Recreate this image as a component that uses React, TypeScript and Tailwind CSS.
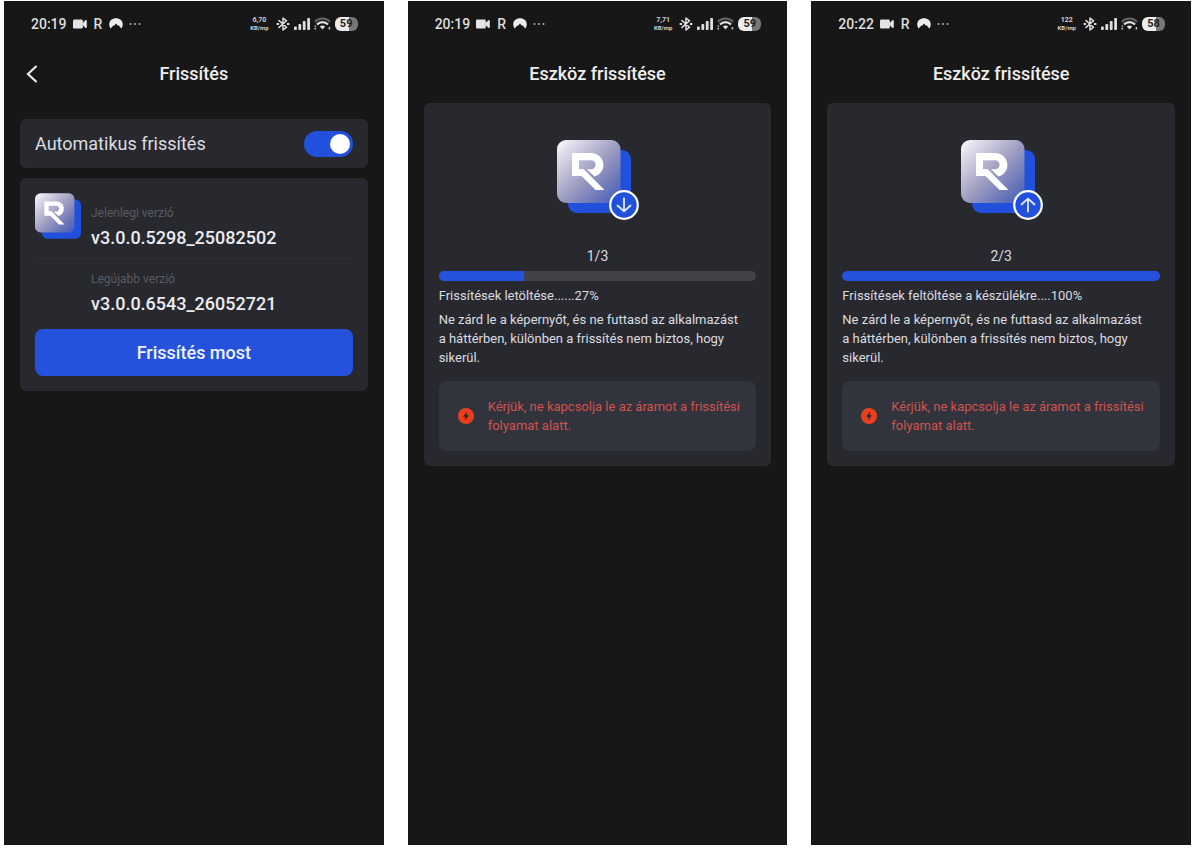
import { useId, useState, type ReactNode } from "react";

function VideoIcon() {
  return (
    <svg className="h-[10px] w-[14px]" viewBox="0 0 14 10" fill="#e4e4e4" aria-hidden="true">
      <rect x="0" y="0.5" width="9.8" height="9" rx="1.2" />
      <path d="M9.4 4.2 L12.4 1.2 Q13.8 0.6 13.8 2 V8 Q13.8 9.4 12.4 8.8 L9.4 6 Z" />
    </svg>
  );
}

function ArcIcon() {
  return (
    <svg className="h-[11px] w-[14px]" viewBox="0 0 14 11" fill="#ececec" aria-hidden="true">
      <path d="M1.7 10.6 C-2 4.6 2 0.3 7 0.3 C12 0.3 16 4.6 12.3 10.6 L9.6 7.2 L8.9 7.8 L7 5.4 L4.9 8 L4.3 7.5 Z" />
    </svg>
  );
}

function DotsIcon() {
  return (
    <svg className="h-[4px] w-[12px]" viewBox="0 0 12 4" fill="#b4b4b4" aria-hidden="true">
      <circle cx="1.5" cy="2" r="1" />
      <circle cx="6" cy="2" r="1" />
      <circle cx="10.5" cy="2" r="1" />
    </svg>
  );
}

function BluetoothIcon() {
  return (
    <svg className="h-[14px] w-[14px]" viewBox="0 0 14 14" fill="none" stroke="#dedede" strokeWidth="1.5" aria-hidden="true">
      <path d="M3 3.6 L10.6 10.2 L7 13 V1 L10.6 3.8 L3 10.4" strokeLinejoin="round" strokeLinecap="round" />
      <path d="M0.6 7 H3 M11 7 H13.4" strokeWidth="1.8" />
    </svg>
  );
}

function SignalIcon() {
  return (
    <svg className="h-[12px] w-[16px]" viewBox="0 0 16 12" fill="#dedede" aria-hidden="true">
      <rect x="0" y="8.5" width="2.8" height="3.5" rx="0.8" />
      <rect x="4.4" y="6" width="2.8" height="6" rx="0.8" />
      <rect x="8.8" y="3" width="2.8" height="9" rx="0.8" />
      <rect x="13.2" y="0" width="2.8" height="12" rx="0.8" />
    </svg>
  );
}

function WifiIcon() {
  return (
    <svg className="h-[13px] w-[17px]" viewBox="0 0 17 13" fill="none" aria-hidden="true">
      <path d="M1 4.8 C5 0.3 12 0.3 16 4.8" stroke="#666666" strokeWidth="2" />
      <path d="M3 7.6 C6 4.3 11 4.3 14 7.6" stroke="#e0e0e0" strokeWidth="2.2" />
      <path d="M5.8 9.6 C7.4 8.1 9.6 8.1 11.2 9.6 L8.5 12.4 Z" fill="#e0e0e0" />
      <path d="M1.3 8.4 V9.8 M1.3 10.8 V12.4 M15.4 10 V12.6" stroke="#bdbdbd" strokeWidth="1.6" />
    </svg>
  );
}

function StatusBar({ time, speed, battery }: { time: string; speed: string; battery: string }) {
  return (
    <div className="flex h-[45px] items-center justify-between pl-[27px] pr-[26px]">
      <div className="flex items-center gap-[6px] text-[#dedede]">
        <span className="text-[14px] font-medium leading-4">{time}</span>
        <VideoIcon />
        <span className="px-[1px] text-[14px] font-medium leading-4">R</span>
        <ArcIcon />
        <DotsIcon />
      </div>
      <div className="flex items-center gap-1">
        <div className="mr-[3px] text-center text-[6px] font-bold leading-[8px] text-[#d0d0d0]">
          <div className="text-[7px]">{speed}</div>
          <div>KB/mp</div>
        </div>
        <BluetoothIcon />
        <SignalIcon />
        <WifiIcon />
        <div className="flex h-[14px] w-[23px] items-center justify-center rounded-[6px] bg-linear-to-r from-[#ececec] from-60% to-[#777777] to-60% text-[11px] font-bold leading-3 text-[#222222]">
          {battery}
        </div>
      </div>
    </div>
  );
}

function LogoShapes() {
  const id = useId();
  return (
    <>
      <defs>
        <linearGradient id={id} x1="0" y1="0" x2="1" y2="1">
          <stop offset="0" stopColor="#ffffff" />
          <stop offset="0.12" stopColor="#e6e3ee" />
          <stop offset="0.5" stopColor="#a09fc2" />
          <stop offset="0.8" stopColor="#6673b8" />
          <stop offset="1" stopColor="#3f5cc4" />
        </linearGradient>
      </defs>
      <rect x="11" y="10" width="63" height="63" rx="9" fill="#2150dc" />
      <rect x="0" y="0" width="63.5" height="63" rx="9" fill={`url(#${id})`} />
      <path
        d="M15 13 H34 A12 12 0 0 1 37.5 36.6 L30 29.3 H34 A4.3 4.3 0 0 0 34 20.2 H22 V29 H26.5 L47.5 50 H38.6 L24.5 36 H15 Z"
        fill="#ffffff"
      />
    </>
  );
}

function BadgedLogo({ direction }: { direction: "down" | "up" }) {
  return (
    <svg className="h-[81px] w-[81px] overflow-visible" viewBox="0 0 81 81" aria-hidden="true">
      <LogoShapes />
      <circle cx="67" cy="65" r="13.8" fill="#2150dc" stroke="#ffffff" strokeWidth="2.2" />
      <path
        d={direction === "down" ? "M67 58.5 V71 M60.5 65.5 L67 71.3 L73.5 65.5" : "M67 71.5 V59 M60.5 64.5 L67 58.7 L73.5 64.5"}
        fill="none"
        stroke="#e6ecff"
        strokeWidth="1.8"
        strokeLinecap="round"
      />
    </svg>
  );
}

function BoltIcon() {
  return (
    <svg className="h-4 w-4 shrink-0" viewBox="0 0 16 16" aria-hidden="true">
      <circle cx="8" cy="8" r="8" fill="#e8401f" />
      <path d="M9 3.6 L5 8.8 H7.4 L6.8 12.4 L11 7.2 H8.6 Z" fill="#33262b" />
    </svg>
  );
}

function Phone({ time, speed, battery, children }: { time: string; speed: string; battery: string; children: ReactNode }) {
  return (
    <section className="flex flex-col bg-[#171717]">
      <StatusBar time={time} speed={speed} battery={battery} />
      {children}
    </section>
  );
}

function UpdateSettings() {
  const [auto, setAuto] = useState(true);
  return (
    <Phone time="20:19" speed="6,70" battery="59">
      <header className="grid h-14 grid-cols-[1fr_auto_1fr] items-center px-[22px]">
        <button type="button" aria-label="Vissza" className="w-3">
          <svg className="h-[18px] w-3" viewBox="0 0 12 18" fill="none" stroke="#eeeeee" strokeWidth="2.1" strokeLinecap="round" aria-hidden="true">
            <path d="M10 1.5 L2 9 L10 16.5" />
          </svg>
        </button>
        <h1 className="text-[18px] font-medium leading-5 text-[#eeeeee]">Frissítés</h1>
      </header>
      <div className="mt-[17px] flex flex-col gap-[10px] px-4">
        <label className="flex h-[49px] items-center justify-between rounded-md bg-[#28292f] px-[15px]">
          <span className="text-[18px] leading-6 text-[#dcdce0]">Automatikus frissítés</span>
          <input
            type="checkbox"
            role="switch"
            checked={auto}
            onChange={(e) => setAuto(e.target.checked)}
            className="flex h-[26px] w-[49px] appearance-none items-center rounded-full bg-[#55565c] px-[3px] before:size-[20px] before:rounded-full before:bg-white checked:justify-end checked:bg-[#2150dc]"
          />
        </label>
        <div className="rounded-md bg-[#28292f] p-[15px]">
          <div className="flex gap-[10px]">
            <svg className="h-[46px] w-[46px] shrink-0" viewBox="0 0 74 73" aria-hidden="true">
              <LogoShapes />
            </svg>
            <div className="pt-3">
              <p className="text-[12px] leading-4 text-[#5a5b60]">Jelenlegi verzió</p>
              <p className="mt-[5px] text-[18px] font-medium leading-6 text-[#ececf0]">v3.0.0.5298_25082502</p>
            </div>
          </div>
          <div className="mt-2 border-t border-[#2f3035]" />
          <div className="pl-14 pt-3">
            <p className="text-[12px] leading-4 text-[#5a5b60]">Legújabb verzió</p>
            <p className="mt-[5px] text-[18px] font-medium leading-6 text-[#ececf0]">v3.0.0.6543_26052721</p>
          </div>
          <button type="button" className="mt-[13px] h-[47px] w-full rounded-lg bg-[#2452dc] text-[18px] font-medium leading-6 text-[#f0f3ff]">
            Frissítés most
          </button>
        </div>
      </div>
    </Phone>
  );
}

interface ProgressProps {
  time: string;
  speed: string;
  battery: string;
  direction: "down" | "up";
  step: string;
  percent: number;
  status: string;
}

const KEEP_OPEN =
  "Ne zárd le a képernyőt, és ne futtasd az alkalmazást a\u00a0háttérben, különben a frissítés nem biztos, hogy sikerül.";

function UpdateProgress({ time, speed, battery, direction, step, percent, status }: ProgressProps) {
  return (
    <Phone time={time} speed={speed} battery={battery}>
      <header className="flex h-14 items-center justify-center">
        <h1 className="text-[18px] font-medium leading-5 text-[#eeeeee]">Eszköz frissítése</h1>
      </header>
      <div className="px-4">
        <div className="mt-px flex flex-col rounded-md bg-[#28292f] px-[15px] pb-[15px] pt-[37px] text-[13px] text-[#dcdce0]">
          <div className="flex justify-center">
            <BadgedLogo direction={direction} />
          </div>
          <p className="mt-[26px] text-center text-[14px] leading-[18px]">{step}</p>
          <div
            role="progressbar"
            aria-label={status}
            aria-valuenow={percent}
            aria-valuemin={0}
            aria-valuemax={100}
            className="mt-[6px] h-[10px] overflow-hidden rounded-full bg-[#414247]"
          >
            <div className="h-full bg-[#2452dc]" style={{ width: `${percent}%` }} />
          </div>
          <p className="mt-[5px] leading-[19px]">{status}</p>
          <p className="mt-[5px] leading-[19px]">{KEEP_OPEN}</p>
          <div className="mt-[14px] flex h-[70px] items-center gap-[14px] rounded-lg bg-[#32343d] pl-[19px]">
            <BoltIcon />
            <p className="leading-[19px] text-[#d0524c]">Kérjük, ne kapcsolja le az áramot a frissítési folyamat alatt.</p>
          </div>
        </div>
      </div>
    </Phone>
  );
}

export default function App() {
  return (
    <main className="grid min-h-screen grid-cols-3 gap-6 bg-white pb-[5px] pl-1 pr-[9px] pt-px font-[Roboto,sans-serif]">
      <UpdateSettings />
      <UpdateProgress time="20:19" speed="7,71" battery="59" direction="down" step="1/3" percent={27} status="Frissítések letöltése......27%" />
      <UpdateProgress time="20:22" speed="122" battery="58" direction="up" step="2/3" percent={100} status="Frissítések feltöltése a készülékre....100%" />
    </main>
  );
}
